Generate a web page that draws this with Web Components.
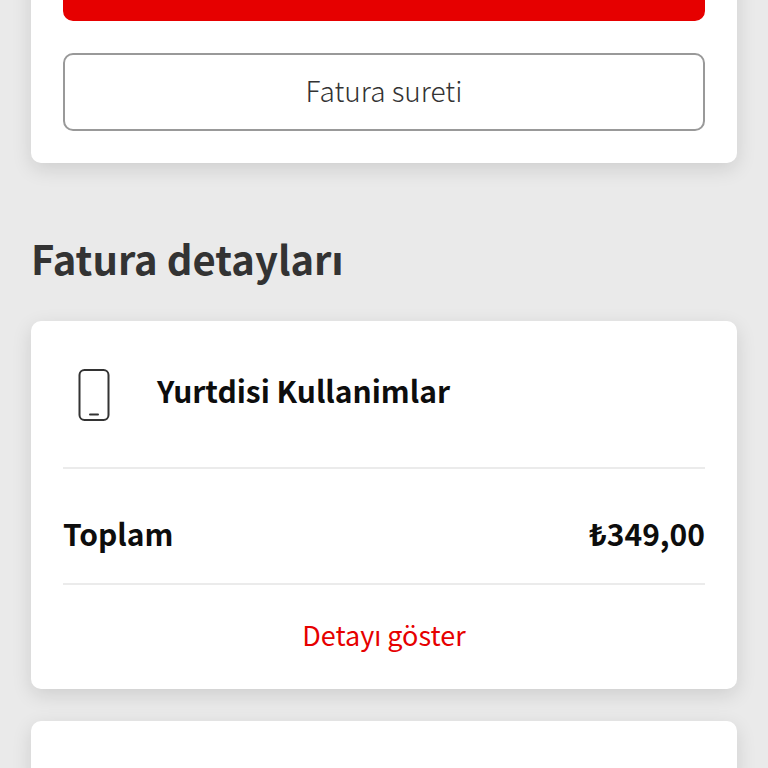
<!DOCTYPE html>
<html lang="tr">
<head>
<meta charset="utf-8">
<meta name="viewport" content="width=device-width, initial-scale=1">
<title>Fatura detayları</title>
<style>
    html {
        --color-page: #eaeaea;
        --color-surface: #ffffff;
        --color-brand: #e60000;
        --color-text: #0d0d0d;
        --color-heading: #333333;
        --color-line: #ebebeb;
        --color-outline: #999999;
        --radius: 10px;
    }

    body {
        margin: 0;
        height: 100vh;
        overflow: hidden;
        background: var(--color-page);
        color: var(--color-text);
        font-family: "Noto Sans CJK JP", "Noto Sans", sans-serif;
    }
</style>
</head>
<body>
<invoice-page>
    <surface-card slot="actions">
        <action-button variant="primary" label="Öde"></action-button>
        <action-button variant="outline">Fatura sureti</action-button>
    </surface-card>
    <span slot="title">Fatura detayları</span>
    <invoice-item>
        <phone-icon slot="icon"></phone-icon>
        <span slot="name">Yurtdisi Kullanimlar</span>
        <span slot="amount">₺349,00</span>
    </invoice-item>
    <surface-card></surface-card>
</invoice-page>

<script>
const define = (name, html) => {
    const template = document.createElement('template');
    template.innerHTML = html;

    window.customElements.define(name, class extends HTMLElement {
        constructor() {
            super();
            this.attachShadow({ mode: 'open' });
            this.shadowRoot.appendChild(template.content.cloneNode(true));
        }

        connectedCallback() {
            const button = this.shadowRoot.querySelector('button');
            if (button && this.hasAttribute('label')) {
                button.setAttribute('aria-label', this.getAttribute('label'));
            }
        }
    });
};

define('surface-card', `
    <style>
        :host {
            display: flex;
            flex-direction: column;
            gap: 32px;
            box-sizing: border-box;
            min-height: 64px;
            padding: 32px;
            background: var(--color-surface);
            border-radius: var(--radius);
            box-shadow: 0 6px 20px rgba(0, 0, 0, 0.12);
        }
    </style>
    <slot></slot>
`);

define('action-button', `
    <style>
        :host {
            display: block;
        }

        button {
            display: block;
            box-sizing: border-box;
            width: 100%;
            height: 78px;
            padding: 0 0 4px;
            border: 2px solid var(--color-outline);
            border-radius: var(--radius);
            background: transparent;
            color: var(--color-heading);
            font-family: inherit;
            font-size: 28px;
            font-weight: 300;
            line-height: 40px;
            cursor: pointer;
        }

        :host([variant="primary"]) button {
            border-color: var(--color-brand);
            background: var(--color-brand);
            color: var(--color-surface);
        }
    </style>
    <button type="button"><slot></slot></button>
`);

define('phone-icon', `
    <style>
        :host {
            display: block;
        }

        svg {
            display: block;
            width: 62px;
            height: 64px;
        }
    </style>
    <svg viewBox="0 0 62 64" fill="none" stroke="#333333" stroke-width="2" stroke-linecap="round" aria-hidden="true">
        <rect x="16.500" y="7" width="29" height="50" rx="5"/>
        <path d="M27 51.500h8"/>
    </svg>
`);

define('invoice-item', `
    <style>
        :host {
            display: block;
        }

        surface-card {
            gap: 0;
            padding-bottom: 20px;
        }

        .header,
        .total {
            display: flex;
            align-items: center;
            border-bottom: 2px solid var(--color-line);
            font-size: 30px;
            font-weight: 700;
            line-height: 40px;
        }

        .header {
            gap: 32px;
            padding: 10px 0 40px;
        }

        h3 {
            margin: 0 0 10px;
            font: inherit;
        }

        .total {
            justify-content: space-between;
            padding: 44px 0 30px;
        }

        button {
            align-self: center;
            margin-top: 20px;
            padding: 10px 24px 14px;
            border: 0;
            background: transparent;
            color: var(--color-brand);
            font-family: inherit;
            font-size: 27px;
            line-height: 40px;
            cursor: pointer;
        }
    </style>
    <surface-card>
        <div class="header">
            <slot name="icon"></slot>
            <h3><slot name="name"></slot></h3>
        </div>
        <div class="total">
            <span>Toplam</span>
            <slot name="amount"></slot>
        </div>
        <button type="button">Detayı göster</button>
    </surface-card>
`);

/* The page is shown scrolled so that the first card starts above the window. */
define('invoice-page', `
    <style>
        :host {
            display: block;
            margin-top: -89px;
            padding: 0 31px;
        }

        h2 {
            margin: 70px 0 38px;
            color: var(--color-heading);
            font-size: 40px;
            font-weight: 700;
            line-height: 50px;
        }

        .items {
            display: flex;
            flex-direction: column;
            gap: 32px;
        }
    </style>
    <slot name="actions"></slot>
    <h2><slot name="title"></slot></h2>
    <div class="items"><slot></slot></div>
`);
</script>
</body>
</html>
